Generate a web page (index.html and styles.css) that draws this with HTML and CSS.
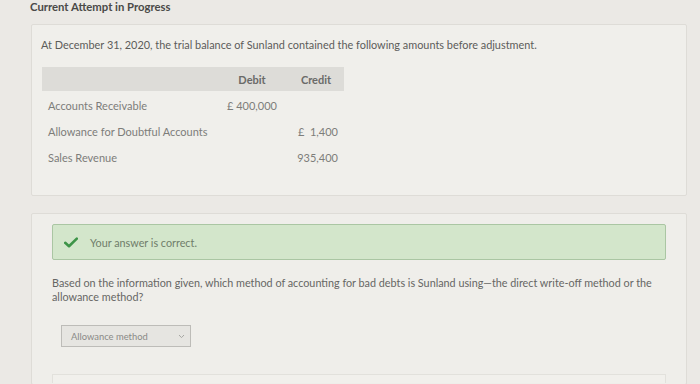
FILE: index.html
```html
<!DOCTYPE html>
<html lang="en">
<head>
    <meta charset="UTF-8">
    <meta name="viewport" content="width=device-width, initial-scale=1.0">
    <title>Current Attempt in Progress</title>
    <link rel="stylesheet" href="styles.css">
</head>
<body>
    <div class="attempt">Current Attempt in Progress</div>

    <!-- Trial balance -->
    <div class="card card-top">
        <p class="intro">At December 31, 2020, the trial balance of Sunland contained the following amounts before adjustment.</p>
        <table class="balance">
            <thead>
                <tr>
                    <th class="label"></th>
                    <th class="debit">Debit</th>
                    <th class="credit">Credit</th>
                </tr>
            </thead>
            <tbody>
                <tr>
                    <td class="label">Accounts Receivable</td>
                    <td class="debit">£ 400,000</td>
                    <td class="credit"></td>
                </tr>
                <tr>
                    <td class="label">Allowance for Doubtful Accounts</td>
                    <td class="debit"></td>
                    <td class="credit">£&nbsp; 1,400</td>
                </tr>
                <tr>
                    <td class="label">Sales Revenue</td>
                    <td class="debit"></td>
                    <td class="credit">935,400</td>
                </tr>
            </tbody>
        </table>
    </div>

    <!-- Question part -->
    <div class="card card-question">
        <div class="correct">
            <svg class="check" width="14" height="11" viewBox="0 0 14 11">
                <path d="M1.2 5.8 L5 9.2 L12.8 1.6" fill="none" stroke="#3d9448" stroke-width="2.6" stroke-linecap="round" stroke-linejoin="round"/>
            </svg>
            <span>Your answer is correct.</span>
        </div>

        <p class="question">Based on the information given, which method of accounting for bad debts is Sunland using&mdash;the direct write-off method or the allowance method?</p>

        <div class="select">
            <span>Allowance method</span>
            <svg class="chev" width="7" height="5" viewBox="0 0 7 5">
                <path d="M1 1 L3.5 3.6 L6 1" fill="none" stroke="#a8a8a4" stroke-width="1"/>
            </svg>
        </div>

        <div class="next"></div>
    </div>
</body>
</html>
```

FILE: styles.css
```css
body {
    margin: 0;
    background: #ebe9e5;
    font-family: Lato, "Open Sans", sans-serif;
    color: #5e5e5c;
    height: 384px;
    overflow: hidden;
}

.attempt {
    font-size: 11.3px;
    font-weight: bold;
    color: #4a4a48;
    padding: 0 0 0 30px;
    line-height: 13px;
    height: 24px;
}

/* Tarjetas */
.card {
    margin-left: 31px;
    width: 656px;
    background: #f0efeb;
    border: 1px solid #dedcd7;
    border-radius: 2px;
    box-sizing: border-box;
}

.card-top {
    height: 172px;
    padding: 13px 0 0 9px;
}

.intro {
    margin: 0;
    font-size: 10.9px;
    line-height: 14px;
    color: #5c5c5a;
}

/* Tabla */
.balance {
    margin: 15px 0 0 1px;
    border-collapse: collapse;
    table-layout: fixed;
    width: 302px;
    font-size: 11px;
}

.balance th {
    background: #dddcd8;
    height: 24px;
    padding: 0;
    font-weight: bold;
    color: #6a6a68;
    text-align: center;
}

.balance td {
    height: 24px;
    padding: 2px 0 0 0;
    color: #7d7d7a;
    text-align: right;
    white-space: nowrap;
}

.balance .label {
    width: 168px;
    text-align: left;
    padding-left: 6px;
}

.balance .debit {
    width: 72px;
}

.balance td.debit {
    padding-right: 11px;
}

.balance .credit {
    width: 56px;
}

.balance td.credit {
    padding-right: 6px;
}

.card-question {
    margin-top: 17px;
    height: 172px;
    padding: 10px 20px 0 20px;
    background: #efeeea;
}

/* Caja verde */
.correct {
    display: flex;
    align-items: center;
    height: 36px;
    background: #d3e6cb;
    border: 1px solid #aac6a3;
    border-radius: 2px;
    box-sizing: border-box;
    padding-left: 11px;
    font-size: 10.8px;
    color: #6f7d6a;
}

.check {
    margin-right: 12px;
}

.question {
    margin: 16px 0 0 0;
    font-size: 10.8px;
    line-height: 14px;
    color: #666664;
}

/* Selector */
.select {
    margin: 21px 0 0 9px;
    width: 130px;
    height: 22px;
    box-sizing: border-box;
    border: 1px solid #bdbcb8;
    background: #e6e5e1;
    display: flex;
    align-items: center;
    justify-content: space-between;
    padding: 0 5px 0 9px;
    font-size: 9.4px;
    color: #8a8a87;
}

.next {
    margin-top: 27px;
    height: 8px;
    border: 1px solid #e2e1dc;
    border-bottom: 0;
    background: #f1f0ec;
}
```
